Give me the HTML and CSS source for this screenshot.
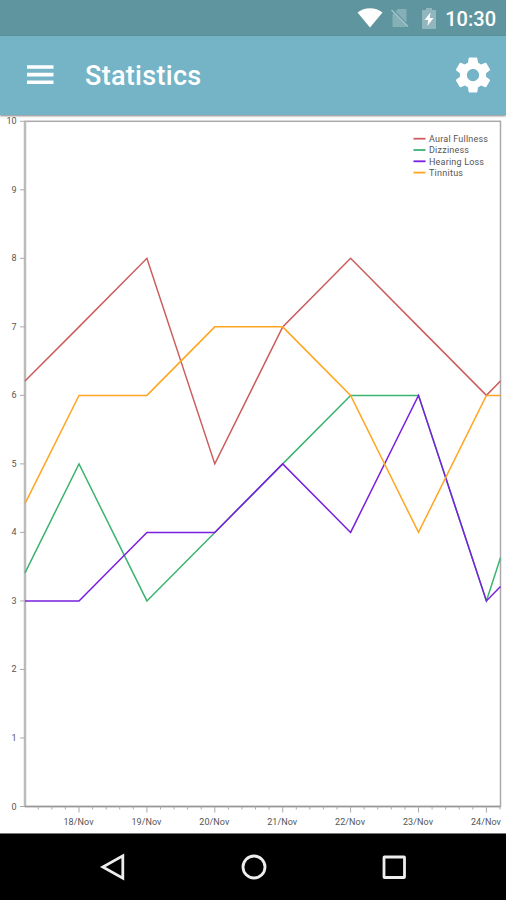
FILE: index.html
```html
<!DOCTYPE html>
<html lang="en">
<head>
    <meta charset="UTF-8">
    <meta name="viewport" content="width=device-width, initial-scale=1.0">
    <title>Statistics</title>
    <link rel="stylesheet" href="styles.css">
</head>
<body>
    <div class="status-bar">
        <svg class="wifi" width="26" height="20" viewBox="0 0 26 20">
            <path d="M13 19.500L0.500 4.500C4 1.800 8.300 0.300 13 0.300s9 1.500 12.500 4.200z" fill="#fff"/>
        </svg>
        <svg class="no-sim" width="18" height="20" viewBox="0 0 18 20">
            <path d="M7 1h7.500q1 0 1 1v17h-13q-1 0-1-1V6.500z" fill="#86b0b7"/>
            <path d="M0 0.300L17.500 17.800" stroke="#5f959f" stroke-width="2"/>
            <path d="M0.500 2L17 18.500" stroke="#a3c3c8" stroke-width="1.400"/>
        </svg>
        <svg class="battery" width="14" height="21" viewBox="0 0 14 21">
            <path d="M4 0h6v2h3q1 0 1 1v17q0 1-1 1H1q-1 0-1-1V3q0-1 1-1h3z" fill="#90b7bd"/>
            <path d="M8.500 4.500L2.500 12h3.700l-0.800 6L11.500 10H7.700z" fill="#fff"/>
        </svg>
        <span class="time">10:30</span>
    </div>

    <header>
        <svg class="menu-icon" width="27" height="20" viewBox="0 0 27 20">
            <path d="M0 0.200h26.500v3.600H0zM0 7.800h26.500v3.600H0zM0 15.400h26.500V19H0z" fill="#fff"/>
        </svg>
        <h1>Statistics</h1>
        <svg class="settings-icon" width="42" height="42" viewBox="0 0 24 24">
            <path fill="#fff" d="M19.430 12.980c.04-.32.07-.64.07-.98s-.03-.66-.07-.98l2.110-1.650c.19-.15.24-.42.12-.64l-2-3.460c-.12-.22-.39-.3-.61-.22l-2.490 1c-.52-.4-1.080-.73-1.690-.98l-.38-2.650C14.460 2.180 14.250 2 14 2h-4c-.25 0-.46.18-.49.42l-.38 2.650c-.61.25-1.170.59-1.690.98l-2.490-1c-.23-.09-.49 0-.61.22l-2 3.460c-.13.22-.07.49.12.64l2.110 1.650c-.04.32-.07.65-.07.98s.03.66.07.98l-2.110 1.650c-.19.15-.24.42-.12.64l2 3.460c.12.22.39.3.61.22l2.490-1c.52.4 1.080.73 1.690.98l.38 2.650c.03.24.24.42.49.42h4c.25 0 .46-.18.49-.42l.38-2.650c.61-.25 1.170-.59 1.690-.98l2.490 1c.23.09.49 0 .61-.22l2-3.460c.12-.22.07-.49-.12-.64l-2.110-1.650zM12 15.500c-1.930 0-3.500-1.570-3.500-3.500s1.570-3.500 3.500-3.500 3.500 1.570 3.500 3.500-1.570 3.500-3.500 3.500z"/>
        </svg>
    </header>

    <main>
        <svg id="chart" width="506" height="718" viewBox="0 115 506 718"></svg>
    </main>

    <nav>
        <svg width="26" height="28" viewBox="0 0 26 28">
            <path d="M22.800 2.800v22.400L2.800 14z"/>
        </svg>
        <svg width="26" height="28" viewBox="0 0 26 28">
            <circle cx="13" cy="14" r="11"/>
        </svg>
        <svg width="26" height="28" viewBox="0 0 26 28">
            <rect x="3" y="4" width="20.500" height="20.500" rx="0.500"/>
        </svg>
    </nav>

    <script src="chart.js"></script>
</body>
</html>
```
FILE: styles.css
```css
body {
    font-family: Roboto, "Liberation Sans", sans-serif;
    background-color: #fff;
    margin: 0;
    height: 900px;
    display: flex;
    flex-direction: column;
    overflow: hidden;
}
svg {
    display: block;
    flex: none;
}
.status-bar {
    height: 36px;
    box-sizing: border-box;
    padding: 0 10px 0 0;
    display: flex;
    align-items: center;
    justify-content: flex-end;
    background-color: #5f959f;
    color: white;
}
.no-sim {
    margin-left: 8px;
}
.battery {
    margin-left: 13px;
}
.time {
    margin-left: 9px;
    padding-top: 2px;
    font-size: 20px;
    font-weight: 500;
    line-height: 24px;
}
header {
    position: relative;
    height: 79px;
    box-sizing: border-box;
    padding: 0 12px 1px 27px;
    display: flex;
    align-items: center;
    background-color: #74b4c6;
    color: white;
    box-shadow: 0 1px 2px rgba(0, 0, 0, 0.5);
}
header h1 {
    margin: 1px 0 0 31px;
    flex: 1;
    font-size: 27px;
    font-weight: 500;
    letter-spacing: 0.3px;
}
main {
    height: 718px;
}
#chart text {
    font-size: 9px;
    fill: #555;
}
.frame {
    fill: none;
    stroke: #aaa;
    stroke-width: 1.500;
}
.axis {
    stroke: #bbb;
    stroke-width: 2.500;
}
.base {
    stroke: #999;
    stroke-width: 1.500;
}
.tick {
    stroke: #aaa;
    stroke-width: 1;
}
.line {
    fill: none;
    stroke-width: 1.500;
}
.key {
    stroke-width: 1.800;
}
nav {
    height: 67px;
    box-sizing: border-box;
    padding: 0 99px 0 100px;
    display: flex;
    align-items: center;
    justify-content: space-between;
    background-color: #000;
    border-top: 1px solid #777;
}
nav svg {
    fill: none;
    stroke: #eee;
    stroke-width: 2.800;
}
```
FILE: chart.js
```js
const chart = document.getElementById('chart');
const left = 25, right = 500.5, top0 = 121.3, bottom = 806.5;
const dayWidth = 67.9;

const series = [
    { name: 'Aural Fullness', color: '#cd5c5c', values: [6.21, 7, 8, 5, 7, 8, 7, 6, 6.21] },
    { name: 'Dizziness', color: '#3cb371', values: [3.41, 5, 3, 4, 5, 6, 6, 3, 3.63] },
    { name: 'Hearing Loss', color: '#7a1fe0', values: [3, 3, 4, 4, 5, 4, 6, 3, 3.21] },
    { name: 'Tinnitus', color: '#ffa520', values: [4.42, 6, 6, 7, 7, 6, 4, 6, 6] }
];

function add(tag, attrs, text) {
    const el = document.createElementNS('http://www.w3.org/2000/svg', tag);
    for (const key in attrs) {
        el.setAttribute(key, attrs[key]);
    }
    if (text !== undefined) {
        el.textContent = text;
    }
    chart.appendChild(el);
}

function yPos(value) {
    return bottom - value * (bottom - top0) / 10;
}

function xPos(i) {
    if (i === 0) return left;
    if (i === 8) return right;
    return 79 + (i - 1) * dayWidth;
}

// Frame and axes
add('rect', { class: 'frame', x: left, y: top0, width: right - left, height: bottom - top0 });
add('line', { class: 'axis', x1: left, y1: top0, x2: left, y2: bottom });
add('line', { class: 'base', x1: left, y1: bottom, x2: right, y2: bottom });

for (let v = 0; v <= 10; v++) {
    const y = yPos(v);
    add('line', { class: 'tick', x1: 20, y1: y, x2: left, y2: y });
    add('text', { x: 16.5, y: y + 3, 'text-anchor': 'end' }, v);
}

for (let n = -3; n <= 31; n++) {
    const x = 79 + n * dayWidth / 5;
    add('line', { class: 'tick', x1: x, y1: bottom, x2: x, y2: bottom + (n % 5 === 0 ? 6 : 3) });
}
for (let d = 0; d < 7; d++) {
    add('text', { x: 78.5 + d * dayWidth, y: 824.5, 'text-anchor': 'middle', textLength: 30 }, (18 + d) + '/Nov');
}

// Lines
series.forEach(s => {
    const points = s.values.map((v, i) => xPos(i) + ',' + yPos(v)).join(' ');
    add('polyline', { class: 'line', points: points, stroke: s.color });
});

// Legend
const widths = [59, 40, 55, 34];
series.forEach((s, i) => {
    const y = 138.7 + i * 11.3;
    add('line', { class: 'key', x1: 413.5, y1: y, x2: 425.5, y2: y, stroke: s.color });
    add('text', { x: 429, y: y + 3.3, textLength: widths[i] }, s.name);
});
```
